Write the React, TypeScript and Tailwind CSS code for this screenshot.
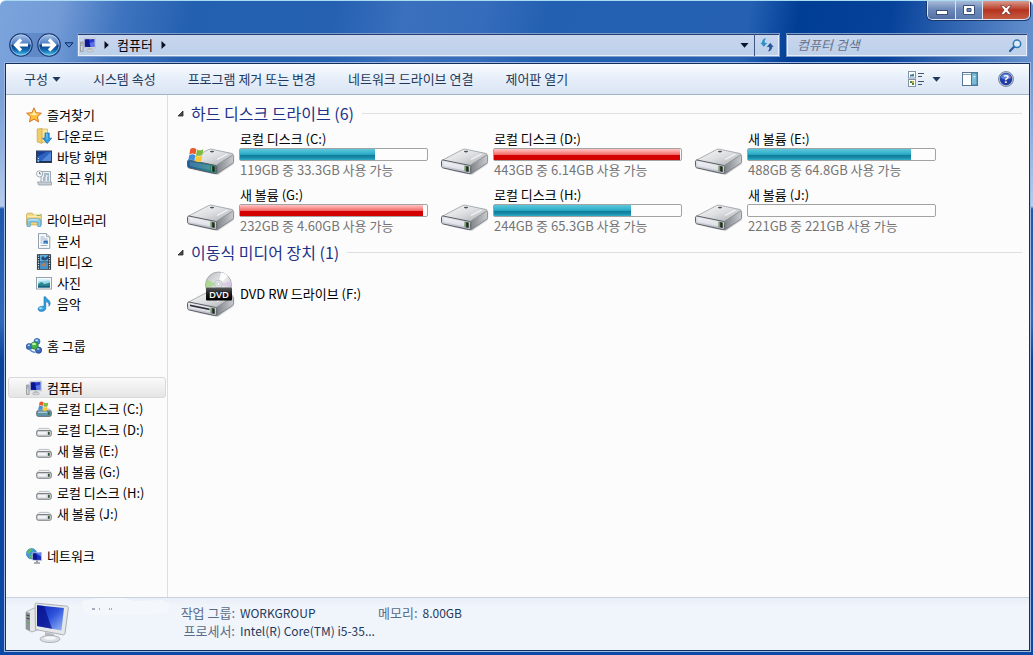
import { useState } from 'react';
import type { ReactNode } from 'react';

type Level = 'root' | 'child';

interface TreeItem {
  label: string;
  icon: ReactNode;
  level: Level;
}

interface Drive {
  name: string;
  caption: string;
  used: number;
  full?: boolean;
  system?: boolean;
}

function ComputerIcon({ className = 'h-4 w-4' }: { className?: string }) {
  return (
    <svg viewBox="0 0 16 16" className={className} aria-hidden="true">
      <path d="M0.5 5h2.6v9.4H0.5z" fill="#d4d7da" stroke="#7d858d" strokeWidth="0.7" />
      <path d="M1.2 6.5h1.2M1.2 8h1.2" stroke="#5b6269" strokeWidth="0.6" />
      <path d="M4 1.6L15.3 1v10L4 10.6z" fill="#e8eaec" stroke="#a7adb4" strokeWidth="0.6" />
      <path d="M4.8 2.4l9.7-.5v8.1l-9.7-.3z" fill="#2438cf" />
      <path d="M4.8 2.4l4-.2 2 7.7-6-.2z" fill="#0a1690" />
      <path d="M9.5 6l5-1.5v5.5l-4-.1z" fill="#6f8df0" opacity=".7" />
      <path d="M8.4 11h3v1.8h-3z" fill="#b3b8bd" />
      <ellipse cx="9.8" cy="13.6" rx="3.8" ry="1.3" fill="#d3d6d9" stroke="#969ca3" strokeWidth="0.5" />
    </svg>
  );
}

function StarIcon() {
  return (
    <svg viewBox="0 0 16 16" className="h-4 w-4" aria-hidden="true">
      <path
        d="M8 .8l2.1 4.9 5.3.5-4 3.5 1.2 5.2L8 12.2l-4.6 2.7 1.2-5.2-4-3.5 5.3-.5z"
        fill="#fdbf3b"
        stroke="#d9782c"
        strokeWidth="1"
        strokeLinejoin="round"
      />
      <path d="M8 3l1.3 3.6 3.4.4L8 8.6 3.4 7l3.3-.4z" fill="#fff0a6" />
    </svg>
  );
}

function DownloadIcon() {
  return (
    <svg viewBox="0 0 16 16" className="h-4 w-4" aria-hidden="true">
      <path d="M5.5 1h6v13.3h-6z" fill="#f9e6a2" stroke="#cfae55" strokeWidth="0.7" />
      <path d="M1.2 1l4.8-.6v15L1.2 14z" fill="#f0cd68" stroke="#c6a448" strokeWidth="0.7" />
      <path d="M9 5h4.2v5.2h2.5l-4.5 5.3-4.6-5.3H9z" fill="#2c9be4" stroke="#1766a8" strokeWidth="0.7" />
      <path d="M10 6h1v5.5" stroke="#9ddcff" strokeWidth="0.8" fill="none" />
    </svg>
  );
}

function DesktopIcon() {
  return (
    <svg viewBox="0 0 16 16" className="h-4 w-4" aria-hidden="true">
      <rect x="0.5" y="2" width="15" height="11.5" fill="#2c63c0" stroke="#303c56" />
      <path d="M5 12.5L15 3v9.5z" fill="#6fa3e6" opacity=".6" />
      <path d="M1 2.5h10L1 8z" fill="#173f93" />
      <path d="M1 12.6h14" stroke="#1b2744" />
      <path d="M2.5 9v1" stroke="#cfe0f8" />
      <circle cx="2.3" cy="12" r="1" fill="#78c9ee" />
    </svg>
  );
}

function RecentIcon() {
  return (
    <svg viewBox="0 0 16 16" className="h-4 w-4" aria-hidden="true">
      <path d="M5 1.5h9.5v12H5z" fill="#edf1f5" stroke="#8794a1" strokeWidth="0.8" />
      <path d="M8 4h5M8 6h2M11.5 6H13M7 8h2.5M11 8h2M7 10h2.5M11 10h2" stroke="#5e7e9f" strokeWidth="1" />
      <circle cx="3.6" cy="3.9" r="3.1" fill="#fafcfd" stroke="#8b959f" strokeWidth="0.8" />
      <path d="M3.6 2v2h1.6" stroke="#446" strokeWidth="0.7" fill="none" />
      <path d="M1.5 12h14v3H2.5z" fill="#c7ced5" stroke="#8b949d" strokeWidth="0.7" />
    </svg>
  );
}

function LibraryIcon() {
  return (
    <svg viewBox="0 0 16 16" className="h-4 w-4" aria-hidden="true">
      <path d="M0.6 2.2l1-1h4.6l1 1.2h8.2v10.5H.6z" fill="#f3d57e" stroke="#c9a64c" strokeWidth="0.8" />
      <path d="M1.5 4.3h13M8 2.8h6" stroke="#fff3bf" strokeWidth="1.1" />
      <path d="M10.5 3.6h4" stroke="#58b060" strokeWidth="0.9" />
      <path
        d="M1.2 14.5V9c0-1.4.8-2.2 2.2-2.2h9.2c1.4 0 2.2.8 2.2 2.2v5.5h-3V10H4.2v4.5z"
        fill="#87cbea"
        stroke="#4a98c3"
        strokeWidth="0.7"
      />
      <path d="M2.2 8.8c.3-.8.8-1 1.5-1h8.6" stroke="#dff4fd" strokeWidth="0.9" fill="none" />
    </svg>
  );
}

function DocumentIcon() {
  return (
    <svg viewBox="0 0 16 16" className="h-4 w-4" aria-hidden="true">
      <path d="M2.5.6h8l3.3 3.2v11.6H2.5z" fill="#fbfcfd" stroke="#8594a5" strokeWidth="0.9" />
      <path d="M10.5.6v3.2h3.3" fill="#dbe4ee" stroke="#8594a5" strokeWidth="0.7" />
      <path d="M4.5 4h4M4.5 6h7M4.5 8h2M4.5 10h2M4.5 12.5h7" stroke="#8aa3c1" strokeWidth="0.9" />
      <path d="M7.5 7.5h4.3v3.4H7.5z" fill="#2f6ab5" />
      <path d="M7.5 10.9l1.8-2 2.5 2z" fill="#71b4de" />
    </svg>
  );
}

function VideoIcon() {
  return (
    <svg viewBox="0 0 16 16" className="h-4 w-4" aria-hidden="true">
      <rect x="1.3" y="0.7" width="13.4" height="14.6" fill="#2d3d4a" stroke="#1d2932" strokeWidth="0.7" />
      <path d="M4 1h8v6.5H4z" fill="#62b0e0" />
      <path d="M4 8.2h8V15H4z" fill="#4593cb" />
      <path d="M5 4l2-2 2 2 3-2.5V5L9.500 6.500 6 6z" fill="#224f79" />
      <path d="M5 11l2-1 1-1.500 2 1.500-1 1 1 1.500-3-.5z" fill="#c77a4a" />
      <path d="M2.6 1.5V15M13.4 1.5V15" stroke="#e4ebf0" strokeWidth="1.1" strokeDasharray="1.2 1.2" />
    </svg>
  );
}

function PictureIcon() {
  return (
    <svg viewBox="0 0 16 16" className="h-4 w-4" aria-hidden="true">
      <rect x="0.5" y="2.5" width="15" height="11.5" fill="#fcfdfe" stroke="#8a97a5" strokeWidth="0.9" />
      <rect x="2" y="4" width="12" height="8.5" fill="#9fdcf0" />
      <path d="M2 9l3.5-2 3 2 5.5-1.5v5H2z" fill="#2c8a8c" />
      <path d="M2 10.8h12v1.7H2z" fill="#1c5c83" />
      <path d="M2 4h12v1.2L2 6.5z" fill="#d9f3fb" />
    </svg>
  );
}

function MusicIcon() {
  return (
    <svg viewBox="0 0 16 16" className="h-4 w-4" aria-hidden="true">
      <path
        d="M8 .8h1.6c.4 2.4 4.8 2.9 4.6 6.8-.1 1.3-.7 2-1.3 2.6.5-2.7-.9-4-3.1-4.6v6.6c0 1.9-1.9 3.2-4.4 3.2-2.1 0-3.3-1-3.3-2.4 0-1.6 1.8-2.8 4-2.8.7 0 1.3.1 1.9.4z"
        fill="#2f9fdd"
        stroke="#1d6fb0"
        strokeWidth="0.6"
      />
      <ellipse cx="4.8" cy="12.3" rx="1.8" ry="1" fill="#a4defa" />
    </svg>
  );
}

function HomegroupIcon() {
  return (
    <svg viewBox="0 0 16 16" className="h-4 w-4" aria-hidden="true">
      <circle cx="11" cy="3.4" r="3" fill="#4c8fce" stroke="#23559a" strokeWidth="0.7" />
      <circle cx="3.2" cy="8.6" r="3" fill="#3b78c2" stroke="#1e478d" strokeWidth="0.7" />
      <circle cx="12.6" cy="12.2" r="3.1" fill="#3c69bb" stroke="#1c3b83" strokeWidth="0.7" />
      <circle cx="8.6" cy="7.6" r="3.7" fill="#45b04b" stroke="#1e7a34" strokeWidth="0.7" />
      <ellipse cx="8" cy="6" rx="2" ry="1.2" fill="#c1efae" />
      <path d="M4 11.8c1.5 2 3.5 2.7 5.5 2.3" stroke="#5d8fce" strokeWidth="1.6" fill="none" />
      <ellipse cx="10.6" cy="2.2" rx="1.5" ry=".8" fill="#d6ecfb" />
      <ellipse cx="12.2" cy="11" rx="1.5" ry=".8" fill="#b7cff2" />
      <ellipse cx="2.8" cy="7.3" rx="1.3" ry=".8" fill="#bfdcf6" />
    </svg>
  );
}

function NetworkIcon() {
  return (
    <svg viewBox="0 0 16 16" className="h-4 w-4" aria-hidden="true">
      <circle cx="5.6" cy="5.7" r="5.2" fill="#3f9bdc" stroke="#2473ae" strokeWidth="0.6" />
      <path d="M2 2.5c2-2 4-1.8 5-1-1 1.4-2.6 1.5-3 3.2L1 6.3c-.3-1.6.2-2.8 1-3.8z" fill="#5dbb58" />
      <path d="M3.5 7l3 .8-1.2 2.9C4 10.5 2.5 9 3.5 7z" fill="#56b45a" />
      <path d="M6.3 5l9.2-.7v8.2l-9.2-.5z" fill="#1d2fc4" stroke="#c5ccd4" strokeWidth="0.8" />
      <path d="M10 5.2l5-.4v3.6z" fill="#5f83ea" />
      <path d="M7 5.6l3-.2 1.5 6.3-4.5-.2z" fill="#0c1788" />
      <path d="M10 12.5h2v1.8h-2z" fill="#8c9299" />
      <path d="M8 15h6" stroke="#7e858c" strokeWidth="1.3" />
    </svg>
  );
}

// Four-colour flag shown on the system drive
function Flag() {
  return (
    <>
      <path d="M2 1.500C3.800.4 5.400.6 7 1.700L6.200 6.300C4.500 5.200 3 5.200 1.100 6.200z" fill="#e8592c" />
      <path d="M7.500 2C9.300 3 11 3 12.800 1.900L12 6.500C10.200 7.500 8.500 7.500 6.700 6.600z" fill="#7fbb3c" />
      <path d="M1 6.800C2.900 5.800 4.400 5.800 6.100 6.800L5.300 11.400C3.600 10.300 2.100 10.300.2 11.400z" fill="#3f8fd8" />
      <path d="M6.600 7.200C8.400 8.100 10.100 8.100 11.900 7.100L11.100 11.700C9.300 12.700 7.600 12.700 5.800 11.700z" fill="#fbc92f" />
    </>
  );
}

function SmallDriveIcon({ system = false }: { system?: boolean }) {
  if (system) {
    return (
      <svg viewBox="0 0 16 16" className="h-4 w-4" aria-hidden="true">
        <path d="M.6 10.3L3 8h10.5l2 2.300z" fill="#e4e6e8" stroke="#9da2a7" strokeWidth="0.7" />
        <rect x="0.6" y="9.8" width="14.8" height="5.6" rx="1.8" fill="#5f94a6" stroke="#5f6a72" strokeWidth="0.9" />
        <path d="M2 11.200h9" stroke="#c7e3ea" />
        <rect x="12" y="11" width="1.7" height="2.9" fill="#3d6b45" />
        <g transform="translate(2 0) scale(.8)">
          <Flag />
        </g>
      </svg>
    );
  }
  return (
    <svg viewBox="0 0 16 16" className="h-4 w-4" aria-hidden="true">
      <path d="M.6 9.300L3.200 6.400h9.600l2.600 2.900z" fill="#f2f3f4" stroke="#a5a9ae" strokeWidth="0.7" />
      <rect x="0.6" y="8.5" width="14.8" height="5.8" rx="1.8" fill="#cfd1d4" stroke="#72777c" strokeWidth="0.9" />
      <path d="M2 10h8.500v2.500H2z" fill="#f3f3f5" />
      <rect x="12" y="9.800" width="1.7" height="3" fill="#33503a" />
    </svg>
  );
}

function DriveBody({ system = false }: { system?: boolean }) {
  const front = system ? 'url(#drive-front-system)' : 'url(#drive-front)';
  return (
    <g>
      <path d="M6 40l25 5 16-11v-4L28 42z" fill="#8d9195" opacity=".35" />
      <path
        d="M28.5 35.5L45.600 25c.9 0 1 .6 1 1.300v5.200c0 .8-.3 1.300-1 1.800L31 43.200c-.8.5-1.500.6-2.500.5z"
        fill="url(#drive-side)"
        stroke="#74787c"
        strokeWidth="0.8"
      />
      <path
        d="M1.200 30.200L21.500 19.600c1-.5 2-.6 3-.4l20.700 4.300c1 .3 1.200 1 .4 1.500L29.500 35.200c-.8.5-1.500.6-2.500.4L1.600 31.100z"
        fill="url(#drive-top)"
        stroke="#8c9094"
        strokeWidth="0.7"
      />
      <path
        d="M2 30c-1.300.1-1.500.9-1.500 1.900v3.600c0 1.500.4 2.200 1.800 2.500l25 5.500c1.400.3 2.400-.3 2.400-1.800v-4.300c0-1.300-.6-1.900-1.800-2.100z"
        fill={front}
        stroke="#595d62"
        strokeWidth="1"
      />
      <path d="M2.600 31.500l20.500 4v4.700L2.600 36z" fill="#f7f7fc" opacity={system ? 0.15 : 0.55} />
      <path d="M23.800 35.800l3.900.8v5.300l-3.900-.9z" fill="#1e2a20" />
      <path d="M23.800 35.800l1.400.3v5.300l-1.400-.4z" fill="#62b33f" />
      <ellipse cx="25" cy="21.600" rx="2.200" ry=".8" fill="#4c4f53" />
      <path d="M30 29.500L40.500 24" stroke="#fff" strokeWidth="1.400" opacity=".8" />
    </g>
  );
}

function DriveIcon({ system = false }: { system?: boolean }) {
  return (
    <svg viewBox="0 0 48 48" className="h-12 w-12 shrink-0" aria-hidden="true">
      <DriveBody system={system} />
      {system && (
        <g transform="translate(1 17) scale(1.2)">
          <Flag />
        </g>
      )}
    </svg>
  );
}

function DvdDriveIcon() {
  return (
    <svg viewBox="0 0 48 48" className="h-12 w-12 shrink-0" aria-hidden="true">
      <g transform="translate(0 2)">
        <DriveBody />
        <path d="M3 32.500l19.500 4v1.800L3 34.300z" fill="#303438" />
      </g>
      <circle cx="31.500" cy="15" r="13" fill="url(#disc)" stroke="#9aa0a6" strokeWidth="0.8" />
      <path d="M31.500 15L20 9.500A13 13 0 0 0 19 18z" fill="#9ed67c" opacity=".7" />
      <path d="M31.500 15L34 2.300A13 13 0 0 1 41 6z" fill="#fff" opacity=".9" />
      <path d="M31.500 15l12.300-4a13 13 0 0 1 .6 5z" fill="#d9c3e6" opacity=".8" />
      <circle cx="31.500" cy="14" r="3.800" fill="#e7e9eb" stroke="#aeb3b8" strokeWidth="0.7" />
      <circle cx="31.500" cy="14" r="1.700" fill="#fff" stroke="#9aa0a6" strokeWidth="0.6" />
      <rect x="19" y="17.500" width="26" height="13" rx="1" fill="url(#dvd-badge)" />
      <text x="32" y="27.500" textAnchor="middle" fontFamily="Open Sans, sans-serif" fontSize="9.500" fontWeight="600" fill="#fff">
        DVD
      </text>
    </svg>
  );
}

// Gradients shared by the drive drawings
function DriveGradients() {
  return (
    <svg width="0" height="0" className="absolute" aria-hidden="true">
      <defs>
        <linearGradient id="drive-top" x1="0" y1="0" x2="1" y2="1">
          <stop offset="0" stopColor="#fbfbfc" />
          <stop offset=".5" stopColor="#dcdee0" />
          <stop offset="1" stopColor="#a9adb1" />
        </linearGradient>
        <linearGradient id="drive-side" x1="0" y1="0" x2="1" y2="0">
          <stop offset="0" stopColor="#7b7f84" />
          <stop offset="1" stopColor="#c9ccd0" />
        </linearGradient>
        <linearGradient id="drive-front" x1="0" y1="0" x2="0" y2="1">
          <stop offset="0" stopColor="#e9eaf0" />
          <stop offset="1" stopColor="#b3b6c2" />
        </linearGradient>
        <linearGradient id="drive-front-system" x1="0" y1="0" x2="1" y2="0">
          <stop offset="0" stopColor="#1d5b96" />
          <stop offset="1" stopColor="#2b9088" />
        </linearGradient>
        <linearGradient id="disc" x1="0" y1="0" x2="1" y2="1">
          <stop offset="0" stopColor="#b4b8bc" />
          <stop offset=".5" stopColor="#ececee" />
          <stop offset="1" stopColor="#a9aeb3" />
        </linearGradient>
        <linearGradient id="dvd-badge" x1="0" y1="0" x2="0" y2="1">
          <stop offset="0" stopColor="#5a5a5a" />
          <stop offset=".5" stopColor="#1a1a1a" />
          <stop offset="1" stopColor="#000" />
        </linearGradient>
      </defs>
    </svg>
  );
}

function BigComputerIcon() {
  return (
    <svg viewBox="0 0 48 48" className="h-12 w-12 shrink-0" aria-hidden="true">
      <defs>
        <linearGradient id="screen" x1="0" y1="0" x2="1" y2="1">
          <stop offset="0" stopColor="#0b1fb4" />
          <stop offset=".5" stopColor="#2f54dc" />
          <stop offset="1" stopColor="#9dbdf6" />
        </linearGradient>
      </defs>
      <path d="M2 14l8-4 6 2v19l-8 3-6-3z" fill="#e4e6e8" stroke="#a1a6ab" strokeWidth="0.8" />
      <path d="M2 14l4 1v18l-4-2z" fill="#8f9499" />
      <path d="M2.500 17l3 1M2.500 20l3 1" stroke="#3c4146" strokeWidth="1.200" />
      <circle cx="4" cy="25" r="1" fill="#59b34b" />
      <path
        d="M11 6.500c0-1 .6-1.500 1.600-1.300L43 8.200c1 .1 1.500.7 1.300 1.700L41 35.500c-.2 1-.9 1.500-1.900 1.300L11.500 31.500z"
        fill="#e5e7e9"
        stroke="#a3a8ae"
        strokeWidth="0.9"
      />
      <path d="M13 7.200l27 2.800-2.500 22.400L13 28z" fill="url(#screen)" />
      <path d="M13 7.200l7 .7L28 30.700 13 28z" fill="#07128b" opacity=".75" />
      <path d="M21 34l9 2v4l-9-1z" fill="#b7bbc0" />
      <ellipse cx="26" cy="41" rx="10" ry="3.500" fill="#dcdee1" stroke="#a1a6ac" strokeWidth="0.8" />
      <ellipse cx="26" cy="40" rx="6" ry="1.700" fill="#f5f6f7" />
    </svg>
  );
}

function CaretDown({ className = '' }: { className?: string }) {
  return (
    <svg viewBox="0 0 9 5" className={`h-[5px] w-[9px] ${className}`} aria-hidden="true">
      <path d="M.5 0h8L4.500 4.800z" fill="currentColor" />
    </svg>
  );
}

function CaretRight() {
  return (
    <svg viewBox="0 0 5 8" className="h-2 w-[5px]" aria-hidden="true">
      <path d="M.5 0v8l4.300-4z" fill="#0a0f1c" />
    </svg>
  );
}

function NavButton({ label, forward = false }: { label: string; forward?: boolean }) {
  const id = forward ? 'orb-forward' : 'orb-back';
  return (
    <button type="button" aria-label={label} className="h-6 w-6 rounded-full">
      <svg viewBox="0 0 24 24" className="h-6 w-6" aria-hidden="true">
        <defs>
          <linearGradient id={id} x1="0" y1="0" x2="0" y2="1">
            <stop offset="0" stopColor="#a9c4ea" />
            <stop offset=".47" stopColor="#4c7cc4" />
            <stop offset=".5" stopColor="#0c3b86" />
            <stop offset=".75" stopColor="#1670b8" />
            <stop offset="1" stopColor="#59d4f4" />
          </linearGradient>
        </defs>
        <circle cx="12" cy="12" r="11.200" fill={`url(#${id})`} stroke="#1b3a73" strokeWidth="1.200" />
        <circle cx="12" cy="12" r="10.200" fill="none" stroke="#cfe1f7" strokeWidth="0.7" opacity=".8" />
        <path
          d={forward ? 'M5 12h12M12 6.500l5.500 5.500-5.500 5.500' : 'M19 12H7M12 6.500L6.500 12l5.500 5.500'}
          fill="none"
          stroke="#fff"
          strokeWidth="3.200"
        />
      </svg>
    </button>
  );
}

function TitleBar() {
  const frame = 'h-[19px] border-b border-l border-[#dbe6f4] flex items-center justify-center';
  return (
    <div className="flex h-[19px] justify-end pr-[3px]">
      <div className="flex overflow-hidden rounded-b-[5px] border-r border-[#dbe6f4] shadow-[0_0_0_1px_#18356c]">
        <button
          type="button"
          aria-label="최소화"
          className={`${frame} w-7 rounded-bl-[5px] bg-linear-to-b from-[#a9bbd8] via-[#6f8aba] via-45% to-[#536fa5]`}
        >
          <svg viewBox="0 0 12 5" className="mt-1 h-[5px] w-3" aria-hidden="true">
            <rect x="0.5" y="0.5" width="11" height="4" fill="#fff" stroke="#3c4f75" />
          </svg>
        </button>
        <button
          type="button"
          aria-label="최대화"
          className={`${frame} w-[27px] bg-linear-to-b from-[#a9bbd8] via-[#6f8aba] via-45% to-[#5b7cb1]`}
        >
          <svg viewBox="0 0 12 10" className="h-[10px] w-3" aria-hidden="true">
            <path d="M.5.5h11v9H.5zM4 3.500v3h4v-3z" fill="#fff" fillRule="evenodd" stroke="#3c4f75" />
          </svg>
        </button>
        <button
          type="button"
          aria-label="닫기"
          className={`${frame} w-[47px] rounded-br-[5px] bg-linear-to-b from-[#d99a8e] via-[#b5331f] via-50% to-[#c65a40]`}
        >
          <svg viewBox="0 0 12 10" className="h-[10px] w-3" aria-hidden="true">
            <path
              d="M.7.6h3.200L6 3l2.100-2.400h3.200L7.900 5l3.400 4.400H8.100L6 7 3.900 9.400H.7L4.100 5z"
              fill="#fff"
              stroke="#6b2a2a"
              strokeWidth="0.7"
            />
          </svg>
        </button>
      </div>
    </div>
  );
}

function AddressRow() {
  const field =
    'flex h-6 items-center border border-[#7f9bc8] bg-linear-to-b from-[#c9d6ee] to-[#bcd0e9] shadow-[inset_0_1px_0_#233f75,inset_0_0_0_1px_#e6eef9]';
  return (
    <div className="mt-[13px] flex items-center pr-[5px] pl-[9px]">
      <div className="flex gap-1 rounded-full bg-[#4b76b8]/50">
        <NavButton label="뒤로" />
        <NavButton label="앞으로" forward />
      </div>
      <button type="button" aria-label="최근 페이지" className="flex w-4 justify-center">
        <svg viewBox="0 0 10 6" className="h-[6px] w-[10px]" aria-hidden="true">
          <path d="M1 .8h8L5 5.200z" fill="#5b8bd0" stroke="#0d2c63" />
        </svg>
      </button>
      <div className={`${field} min-w-0 flex-1`}>
        <ComputerIcon className="ml-[2px] h-4 w-4" />
        <span className="ml-2">
          <CaretRight />
        </span>
        <button type="button" className="ml-2 text-black">
          컴퓨터
        </button>
        <span className="ml-2">
          <CaretRight />
        </span>
        <button
          type="button"
          aria-label="이전 위치"
          className="ml-auto flex h-full w-5 items-center justify-center text-[#0a1430]"
        >
          <CaretDown />
        </button>
        <button
          type="button"
          aria-label="새로 고침"
          className="flex h-full w-[25px] items-center justify-center border-l border-[#3e5886]"
        >
          <svg viewBox="0 0 16 14" className="h-[14px] w-4" aria-hidden="true">
            <path d="M6 0C3.500 1 2.700 2.800 2.800 4.500H.8l4 4.800 4-4.800H6C5.800 2.800 6.200 1.500 7.500.5z" fill="#2f8fc9" stroke="#f1f7fd" strokeWidth="0.4" />
            <path d="M10 13.800c2.500-1 3.300-2.800 3.200-4.500h2l-4-4.800-4 4.800H10c.2 1.700-.2 3-1.500 4z" fill="#28569c" stroke="#f1f7fd" strokeWidth="0.4" />
          </svg>
        </button>
      </div>
      <div className={`${field} ml-[6px] w-[242px]`}>
        <input
          type="search"
          aria-label="컴퓨터 검색"
          placeholder="컴퓨터 검색"
          className="min-w-0 flex-1 bg-transparent pl-[10px] italic outline-none placeholder:text-[#66728a]"
        />
        <button type="button" aria-label="검색" className="mr-[5px]">
          <svg viewBox="0 0 13 13" className="h-[13px] w-[13px]" aria-hidden="true">
            <path d="M1 12l4.300-4.500" stroke="#2a5b9f" strokeWidth="2.200" strokeLinecap="round" />
            <circle cx="8" cy="4.800" r="3.700" fill="#dcecf9" stroke="#2f76b5" strokeWidth="1.500" />
          </svg>
        </button>
      </div>
    </div>
  );
}

const commands = ['시스템 속성', '프로그램 제거 또는 변경', '네트워크 드라이브 연결', '제어판 열기'];

function Toolbar() {
  return (
    <div className="flex h-[31px] shrink-0 items-center border-b border-[#a0b3c9] bg-linear-to-b from-[#fafdff] via-[#e6eef9] via-50% to-[#dbe5f4] pr-[15px] pl-[18px] text-[#1e395b]">
      <div className="flex gap-8">
        <button type="button" className="flex items-center gap-1 whitespace-nowrap">
          구성
          <CaretDown />
        </button>
        {commands.map((command) => (
          <button key={command} type="button" className="whitespace-nowrap">
            {command}
          </button>
        ))}
      </div>
      <div className="ml-auto flex items-center">
        <button type="button" aria-label="보기 변경">
          <svg viewBox="0 0 16 16" className="h-4 w-4" aria-hidden="true">
            <rect x="0.5" y="0.5" width="7" height="6.500" fill="#fff" stroke="#8494a8" />
            <path d="M2 5.500V3.500h2l1-.7h1v2.700z" fill="#3a7fa0" />
            <rect x="0.5" y="8.500" width="7" height="7" fill="#fff" stroke="#8494a8" />
            <path d="M2 10h2v2H2zM4 12h2v2H4z" fill="#4a8a3a" />
            <path d="M4 10h2v2H4z" fill="#c8b23a" />
            <path d="M10 2.500h6M10 5.500h4M10 10.500h6M10 13.500h4" stroke="#44566e" />
          </svg>
        </button>
        <button type="button" aria-label="추가 옵션" className="ml-2">
          <CaretDown />
        </button>
        <button type="button" aria-label="미리 보기 창" className="ml-[21px]">
          <svg viewBox="0 0 16 14" className="h-[14px] w-4" aria-hidden="true">
            <rect x="0.5" y="0.5" width="15" height="13" fill="#fdfefe" stroke="#5a7591" />
            <path d="M1 2.500h14" stroke="#86a5c3" />
            <path d="M9.500 1h5.500v12H9.500z" fill="#79bcd8" stroke="#447e9f" />
            <path d="M11.500 4.500h2M11.500 6h1" stroke="#d9f1fa" />
          </svg>
        </button>
        <button type="button" aria-label="도움말" className="ml-5">
          <svg viewBox="0 0 16 16" className="h-4 w-4" aria-hidden="true">
            <circle cx="8" cy="8" r="7.500" fill="#b9c4dc" stroke="#75829f" strokeWidth="0.9" />
            <circle cx="8" cy="8" r="6.200" fill="#1f3da3" />
            <path d="M2.500 7a5.600 5.600 0 0 1 11 0C10 8.600 6 8.600 2.500 7z" fill="#5f80d2" />
            <text x="8" y="12" textAnchor="middle" fontFamily="Open Sans, sans-serif" fontSize="11" fontWeight="700" fill="#fff">
              ?
            </text>
          </svg>
        </button>
      </div>
    </div>
  );
}

const tree: TreeItem[][] = [
  [
    { label: '즐겨찾기', icon: <StarIcon />, level: 'root' },
    { label: '다운로드', icon: <DownloadIcon />, level: 'child' },
    { label: '바탕 화면', icon: <DesktopIcon />, level: 'child' },
    { label: '최근 위치', icon: <RecentIcon />, level: 'child' },
  ],
  [
    { label: '라이브러리', icon: <LibraryIcon />, level: 'root' },
    { label: '문서', icon: <DocumentIcon />, level: 'child' },
    { label: '비디오', icon: <VideoIcon />, level: 'child' },
    { label: '사진', icon: <PictureIcon />, level: 'child' },
    { label: '음악', icon: <MusicIcon />, level: 'child' },
  ],
  [{ label: '홈 그룹', icon: <HomegroupIcon />, level: 'root' }],
  [
    { label: '컴퓨터', icon: <ComputerIcon />, level: 'root' },
    { label: '로컬 디스크 (C:)', icon: <SmallDriveIcon system />, level: 'child' },
    { label: '로컬 디스크 (D:)', icon: <SmallDriveIcon />, level: 'child' },
    { label: '새 볼륨 (E:)', icon: <SmallDriveIcon />, level: 'child' },
    { label: '새 볼륨 (G:)', icon: <SmallDriveIcon />, level: 'child' },
    { label: '로컬 디스크 (H:)', icon: <SmallDriveIcon />, level: 'child' },
    { label: '새 볼륨 (J:)', icon: <SmallDriveIcon />, level: 'child' },
  ],
  [{ label: '네트워크', icon: <NetworkIcon />, level: 'root' }],
];

function Sidebar() {
  const [selected, setSelected] = useState('컴퓨터');

  return (
    <nav className="flex w-[162px] shrink-0 flex-col gap-[21px] border-r border-[#d2e1ee] pt-[9px] pr-px pl-[2px]">
      {tree.map((group) => (
        <ul key={group[0].label}>
          {group.map((item) => (
            <li key={item.label}>
              <a
                href="#"
                onClick={() => setSelected(item.label)}
                className={`flex h-[21px] items-center gap-[5px] rounded-[3px] border whitespace-nowrap ${
                  item.level === 'root' ? 'pl-[17px]' : 'pl-[27px]'
                } ${
                  selected === item.label
                    ? 'border-[#d9d9d9] bg-linear-to-b from-[#fafafa] to-[#e5e5e5]'
                    : 'border-transparent'
                }`}
              >
                {item.icon}
                {item.label}
              </a>
            </li>
          ))}
        </ul>
      ))}
    </nav>
  );
}

const drives: Drive[] = [
  { name: '로컬 디스크 (C:)', caption: '119GB 중 33.3GB 사용 가능', used: 72, system: true },
  { name: '로컬 디스크 (D:)', caption: '443GB 중 6.14GB 사용 가능', used: 99.5, full: true },
  { name: '새 볼륨 (E:)', caption: '488GB 중 64.8GB 사용 가능', used: 87 },
  { name: '새 볼륨 (G:)', caption: '232GB 중 4.60GB 사용 가능', used: 98, full: true },
  { name: '로컬 디스크 (H:)', caption: '244GB 중 65.3GB 사용 가능', used: 73 },
  { name: '새 볼륨 (J:)', caption: '221GB 중 221GB 사용 가능', used: 0 },
];

function DriveTile({ drive }: { drive: Drive }) {
  return (
    <div className="flex gap-1">
      <DriveIcon system={drive.system} />
      <div className="w-[189px]">
        <div className="h-[18px] pl-px leading-[18px]">{drive.name}</div>
        <div
          role="progressbar"
          aria-label={drive.name}
          aria-valuenow={drive.used}
          className="h-[13px] rounded-[2px] border border-[#a3a3a3] bg-[#fdfdfd]"
        >
          <div
            className={`h-full ${
              drive.full
                ? 'bg-linear-to-b from-[#ffc4c4] via-[#f26a6a] via-50% to-[#d20000] to-55%'
                : 'bg-[linear-gradient(180deg,#5cc6da_0,#38b5cd_35%,#27a6c1_50%,#0f7c9b_58%,#1a8ba8_80%,#2fb0c8_100%)]'
            }`}
            style={{ width: `${drive.used}%` }}
          />
        </div>
        <div className="h-[18px] pl-px leading-[18px] text-[#757575]">{drive.caption}</div>
      </div>
    </div>
  );
}

function GroupHeading({ title }: { title: string }) {
  return (
    <div className="flex h-6 items-center">
      <svg viewBox="0 0 7 7" className="h-[7px] w-[7px]" aria-hidden="true">
        <path d="M6 1v5H1z" fill="#4d4d4d" stroke="#262626" strokeWidth="0.8" strokeLinejoin="round" />
      </svg>
      <h2 className="ml-[7px] text-base leading-6 text-[#1e3287]">{title}</h2>
      <div className="ml-2 h-px flex-1 bg-[#dfdfe3]" />
    </div>
  );
}

function Content() {
  return (
    <main className="min-w-0 flex-1 pt-[6px] pr-[7px] pl-[9px]">
      <section>
        <GroupHeading title="하드 디스크 드라이브 (6)" />
        <div className="mt-[5px] grid grid-cols-[repeat(auto-fill,254px)] gap-y-[7px] pl-[10px]">
          {drives.map((drive) => (
            <DriveTile key={drive.name} drive={drive} />
          ))}
        </div>
      </section>
      <section className="mt-[5px]">
        <GroupHeading title="이동식 미디어 장치 (1)" />
        <div className="mt-[6px] flex items-center gap-[5px] pl-[10px]">
          <DvdDriveIcon />
          DVD RW 드라이브 (F:)
        </div>
      </section>
    </main>
  );
}

function DetailsPane() {
  return (
    <footer className="flex h-[53px] shrink-0 items-start border-t border-[#c9d1de] bg-linear-to-b from-[#e9eff8] to-[#f0f4fb] to-15% pl-[18px] text-xs leading-[18px] text-[#1e395b]">
      <BigComputerIcon />
      <svg viewBox="0 0 92 20" className="ml-2 h-5 w-[92px]" aria-hidden="true">
        <path d="M2 3L20 0h24l10 3 28-1 8 4-3 9-20 2H12L3 14z" fill="#f4f7fc" />
        <path d="M12 11h3M19 11h1M29 11h1M31 11h1" stroke="#54657f" />
      </svg>
      <dl className="grid grid-cols-[63px_138px] gap-x-[5px] pt-[6px]">
        <dt className="text-right text-[13px] whitespace-nowrap text-[#5a6d88]">작업 그룹:</dt>
        <dd>WORKGROUP</dd>
        <dt className="text-right text-[13px] whitespace-nowrap text-[#5a6d88]">프로세서:</dt>
        <dd className="whitespace-nowrap">Intel(R) Core(TM) i5-35...</dd>
      </dl>
      <dl className="flex gap-[5px] pt-[6px]">
        <dt className="text-[13px] text-[#5a6d88]">메모리:</dt>
        <dd>8.00GB</dd>
      </dl>
    </footer>
  );
}

export default function App() {
  return (
    <div className="flex min-h-screen flex-col overflow-hidden rounded-t-[6px] border-t border-[#a9dcf3] bg-[linear-gradient(100deg,#7ba3dc_0,#739bd6_60px,#3f74bf_120px,#2460b0_190px,#2560b1_330px,#3a70bd_400px,#356cbb_480px,#2460b1_540px,#2560b2_740px,#003d94_790px,#06429a_880px,#5583c5_1000px,#6b95d0_100%)] bg-[length:100%_96px] bg-no-repeat font-['Noto_Sans_CJK_KR',sans-serif] text-[13px] leading-[18px] text-black">
      <DriveGradients />
      <header className="h-[61px] shrink-0">
        <TitleBar />
        <AddressRow />
      </header>
      <div className="flex flex-1 flex-col bg-[linear-gradient(180deg,transparent_0,#7ba0d6_34px,#8fb0e0_80px,#b9cdec_144px,#1d57ab_147px,#2f69b8_260px,#0a429a_300px,#0c49a6_100%)] pr-[2px] pb-[3px] pl-1">
        <div className="flex flex-1 flex-col border border-[#9db9e2]">
          <div className="flex flex-1 flex-col border border-[#15305f] bg-[#fcfcfd]">
            <Toolbar />
            <div className="flex flex-1">
              <Sidebar />
              <Content />
            </div>
            <DetailsPane />
          </div>
        </div>
      </div>
    </div>
  );
}
